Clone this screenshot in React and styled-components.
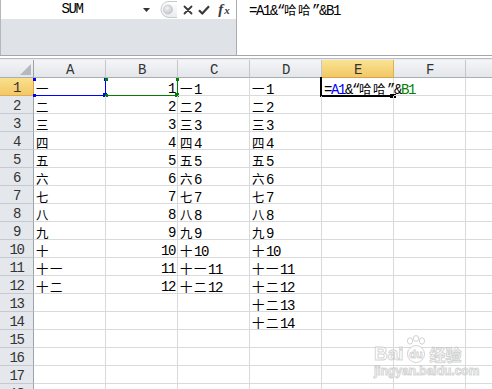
import React from 'react'
import styled, { createGlobalStyle } from 'styled-components'

const GlobalStyle = createGlobalStyle`
    html, body {
        margin: 0;
        padding: 0;
        background: #fff;
        overflow: hidden;
    }
`;

const Page = styled.div`
    position: relative;
    width: 492px;
    height: 389px;
    overflow: hidden;
    font-family: "Liberation Mono", "Noto Sans CJK SC", monospace;
    font-size: 14px;
    color: #000;
`;

const FormulaBar = styled.div`
    display: flex;
    height: 56px;
    box-sizing: border-box;
    border-bottom: 1px solid #a3a7ad;
`;

const LeftPanel = styled.div`
    width: 236px;
    display: flex;
    flex-direction: column;
    background: #dfe2e7;
    border-left: 1px solid #b4b8be;
    box-sizing: border-box;
`;

const NameRow = styled.div`
    height: 19px;
    display: flex;
    align-items: center;
    background: #fff;
`;

const NameBox = styled.div`
    width: 158px;
    display: flex;
    align-items: center;
`;

const NameText = styled.span`
    width: 142px;
    text-align: center;
    letter-spacing: -1.4px;
    line-height: 19px;
`;

const Buttons = styled.div`
    flex: 1;
    display: flex;
    align-items: center;
    height: 19px;
`;

const IconSlot = styled.span`
    display: flex;
    align-items: center;
    justify-content: center;
    width: ${p => p.$w}px;
    height: 19px;
    margin-left: ${p => p.$ml || 0}px;
`;

const Fx = styled.span`
    font-family: "Liberation Serif", serif;
    font-style: italic;
    font-weight: 700;
    font-size: 15px;
    color: #3a3a3a;
    letter-spacing: 0;
    line-height: 19px;

    small {
        font-size: 11px;
        margin-left: 1px;
    }
`;

const FormulaInput = styled.div`
    flex: 1;
    background: #fff;
    border-left: 1px solid #a9adb3;
    padding: 1px 0 0 12px;
    line-height: 19px;
    letter-spacing: -1.4px;
    white-space: nowrap;
`;

const Strip = styled.div`
    height: 4px;
    background: linear-gradient(to bottom, #fff 0 2px, #b8bcc2 2px 3px, #e9ebee 3px 4px);
`;

const Sheet = styled.div`
    display: grid;
    grid-template-columns: 34px repeat(7, 72px);
    grid-auto-rows: 18px;
    height: 329px;
    overflow: hidden;
`;

const Corner = styled.div`
    box-sizing: border-box;
    display: flex;
    align-items: flex-end;
    justify-content: flex-end;
    padding: 0 2px 2px 0;
    background: linear-gradient(to bottom, #f3f4f6, #e2e5e9);
    border-right: 1px solid #9ea3aa;
    border-bottom: 1px solid #a9aeb4;
`;

const ColHead = styled.div`
    box-sizing: border-box;
    text-align: center;
    line-height: 18px;
    padding-top: 1px;
    color: #333;
    letter-spacing: -1.4px;
    background: ${p => p.$active
        ? 'linear-gradient(to bottom, #fae392, #f2c766)'
        : 'linear-gradient(to bottom, #f4f5f7, #e3e6ea)'};
    border-right: 1px solid ${p => p.$active ? '#e0ad52' : '#c3c7cd'};
    border-bottom: 1px solid ${p => p.$active ? '#d9a24a' : '#a9aeb4'};
`;

const RowHead = styled.div`
    box-sizing: border-box;
    text-align: center;
    line-height: 18px;
    padding-top: 1px;
    color: #333;
    letter-spacing: -1.4px;
    background: ${p => p.$active
        ? 'linear-gradient(to bottom, #fae08c, #f3c865)'
        : '#e4e7eb'};
    border-right: 1px solid ${p => p.$active ? '#d9a24a' : '#9ea3aa'};
    border-bottom: 1px solid ${p => p.$active ? '#e0ad52' : '#c6cad0'};
`;

const Cell = styled.div`
    position: relative;
    box-sizing: border-box;
    padding: 2px 2px 0 2px;
    line-height: 18px;
    white-space: nowrap;
    text-align: ${p => p.$align || 'left'};
    letter-spacing: -1.4px;
    border-right: 1px solid #d8dadc;
    border-bottom: 1px solid #d8dadc;
`;

const Han = styled.span`
    font-family: "Noto Sans CJK SC", sans-serif;
    font-size: 12.4px;
    letter-spacing: 1.6px;
`;

const Ref = styled.span`
    color: ${p => p.$color};
`;

const RangeBox = styled.div`
    position: absolute;
    left: 0;
    top: 0;
    right: -1px;
    bottom: -1px;
    border-right: 1px solid ${p => p.$color};
    border-bottom: 1px solid ${p => p.$color};
    pointer-events: none;
`;

const Handle = styled.i`
    position: absolute;
    width: ${p => p.$size}px;
    height: ${p => p.$size}px;
    background: ${p => p.$color};
    ${p => p.$x === 'l' ? 'left: -1px;' : 'right: -2px;'}
    ${p => p.$y === 't' ? 'top: 0;' : 'bottom: -2px;'}
`;

const EditFrame = styled.div`
    position: absolute;
    left: -2px;
    top: -1px;
    right: 1px;
    bottom: -2px;
    border-left: 2px solid #000;
    border-bottom: 2px solid #000;
    pointer-events: none;
`;

const FillHandle = styled.i`
    position: absolute;
    right: -4px;
    bottom: -3px;
    width: 6px;
    height: 4px;
    background: #000;
`;

const Watermark = styled.div`
    position: absolute;
    left: 374px;
    top: 333px;
    display: flex;
    flex-direction: column;
    color: rgba(255, 255, 255, 0.85);
    -webkit-text-stroke: 1px rgba(175, 175, 175, 0.55);
    pointer-events: none;
`;

const MarkTop = styled.div`
    display: flex;
    align-items: flex-end;
    height: 30px;
    font-family: "Liberation Sans", sans-serif;
    font-weight: 700;
    font-size: 19px;
    line-height: 19px;
`;

const MarkCn = styled.span`
    font-family: "Noto Sans CJK SC", sans-serif;
    font-size: 16px;
    line-height: 18px;
    margin-left: 2px;
`;

const MarkUrl = styled.div`
    font-family: "Liberation Sans", sans-serif;
    font-weight: 700;
    font-size: 12px;
    line-height: 14px;
    margin-top: 1px;
`;

const CJK = /[\u3000-\u9fff]/;

const renderText = (str) => {
    const runs = [];
    let buf = '';
    let han = null;
    for (const ch of str) {
        const isHan = CJK.test(ch);
        if (han !== null && isHan !== han) {
            runs.push({ han, text: buf });
            buf = '';
        }
        han = isHan;
        buf += ch;
    }
    if (buf) runs.push({ han, text: buf });
    return runs.map((r, i) => r.han ? <Han key={i}>{r.text}</Han> : <React.Fragment key={i}>{r.text}</React.Fragment>);
};

const nums = ['一', '二', '三', '四', '五', '六', '七', '八', '九', '十', '十一', '十二'];
const cols = ['A', 'B', 'C', 'D', 'E', 'F', 'G'];

const cellValue = (row, col) => {
    const i = row - 1;
    if (col === 'A' && i < 12) return { text: nums[i] };
    if (col === 'B' && i < 12) return { text: String(row), align: 'right' };
    if (col === 'C' && i < 12) return { text: nums[i] + row };
    if (col === 'D' && i < 14) return { text: (i < 12 ? nums[i] : '十二') + row };
    return null;
};

const Range = ({ color }) => (
    <RangeBox $color={color}>
        <Handle $color={color} $size={3} $x="l" $y="t" />
        <Handle $color={color} $size={3} $x="r" $y="t" />
        <Handle $color={color} $size={3} $x="l" $y="b" />
        <Handle $color={color} $size={4} $x="r" $y="b" />
    </RangeBox>
);

const Formula = () => (
    <>
        =<Ref $color="#0000ff">A1</Ref>&amp;“<Han>哈哈</Han>”&amp;<Ref $color="#008000">B1</Ref>
    </>
);

const Toolbar = () => (
    <Buttons>
        <IconSlot $w={18}>
            <svg width="18" height="19" viewBox="0 0 18 19">
                <defs>
                    <linearGradient id="tab" x1="0" y1="0" x2="0" y2="1">
                        <stop offset="0" stopColor="#ffffff" />
                        <stop offset="1" stopColor="#e9ebee" />
                    </linearGradient>
                    <radialGradient id="knob" cx="0.4" cy="0.35" r="0.7">
                        <stop offset="0" stopColor="#f4f4f4" />
                        <stop offset="1" stopColor="#c2c4c7" />
                    </radialGradient>
                </defs>
                <path d="M18 1.5 H10 A8 8 0 0 0 10 17.5 H18" fill="url(#tab)" stroke="#c6c9ce" />
                <circle cx="9" cy="9.5" r="4.5" fill="url(#knob)" stroke="#c4c6ca" strokeWidth="0.8" />
            </svg>
        </IconSlot>
        <IconSlot $w={12} $ml={5}>
            <svg width="10" height="10" viewBox="0 0 10 10">
                <path d="M1.5 1.5 L8.5 8.5 M8.5 1.5 L1.5 8.5" stroke="#3a3a3a" strokeWidth="1.8" strokeLinecap="round" />
            </svg>
        </IconSlot>
        <IconSlot $w={14} $ml={3}>
            <svg width="12" height="10" viewBox="0 0 12 10">
                <path d="M1 5.2 L4.3 8.6 L11 1.2" stroke="#3a3a3a" strokeWidth="2.2" fill="none" strokeLinejoin="round" />
            </svg>
        </IconSlot>
        <IconSlot $w={16} $ml={5}>
            <Fx>f<small>x</small></Fx>
        </IconSlot>
    </Buttons>
);

const App = () => {
    const rows = Array.from({ length: 19 }, (_, i) => i + 1);
    return (
        <Page>
            <GlobalStyle />
            <FormulaBar>
                <LeftPanel>
                    <NameRow>
                        <NameBox>
                            <NameText>SUM</NameText>
                            <svg width="7" height="4" viewBox="0 0 7 4">
                                <polygon points="0,0 7,0 3.5,4" fill="#333" />
                            </svg>
                        </NameBox>
                        <Toolbar />
                    </NameRow>
                </LeftPanel>
                <FormulaInput>
                    =A1&amp;“<Han>哈哈</Han>”&amp;B1
                </FormulaInput>
            </FormulaBar>
            <Strip />
            <Sheet>
                <Corner>
                    <svg width="11" height="11" viewBox="0 0 11 11">
                        <polygon points="11,0 11,11 0,11" fill="#b5b9bf" />
                    </svg>
                </Corner>
                {cols.map(c => (
                    <ColHead key={c} $active={c === 'E'}>{c}</ColHead>
                ))}
                {rows.map(r => (
                    <React.Fragment key={r}>
                        <RowHead $active={r === 1}>{r}</RowHead>
                        {cols.map(c => {
                            const v = cellValue(r, c);
                            return (
                                <Cell key={c} $align={v && v.align}>
                                    {r === 1 && c === 'E' ? <Formula /> : v && renderText(v.text)}
                                    {r === 1 && c === 'A' && <Range color="#0000ff" />}
                                    {r === 1 && c === 'B' && <Range color="#008000" />}
                                    {r === 1 && c === 'E' && (
                                        <EditFrame><FillHandle /></EditFrame>
                                    )}
                                </Cell>
                            );
                        })}
                    </React.Fragment>
                ))}
            </Sheet>
            <Watermark>
                <MarkTop>
                    Bai
                    <svg width="22" height="28" viewBox="0 0 22 28" style={{ margin: '0 1px' }}>
                        <g fill="rgba(255,255,255,0.85)" stroke="rgba(175,175,175,0.55)" strokeWidth="1">
                            <ellipse cx="5" cy="6" rx="2.6" ry="3.2" />
                            <ellipse cx="11" cy="3.5" rx="2.6" ry="3" />
                            <ellipse cx="17" cy="6" rx="2.6" ry="3.2" />
                            <circle cx="11" cy="19" r="8.5" />
                        </g>
                        <text x="11" y="23" textAnchor="middle" fontFamily="Liberation Sans, sans-serif" fontWeight="700" fontSize="11" fill="rgba(255,255,255,0.9)" stroke="rgba(175,175,175,0.6)" strokeWidth="0.8">du</text>
                    </svg>
                    <MarkCn>经验</MarkCn>
                </MarkTop>
                <MarkUrl>jingyan.baidu.com</MarkUrl>
            </Watermark>
        </Page>
    )
}

export default App
